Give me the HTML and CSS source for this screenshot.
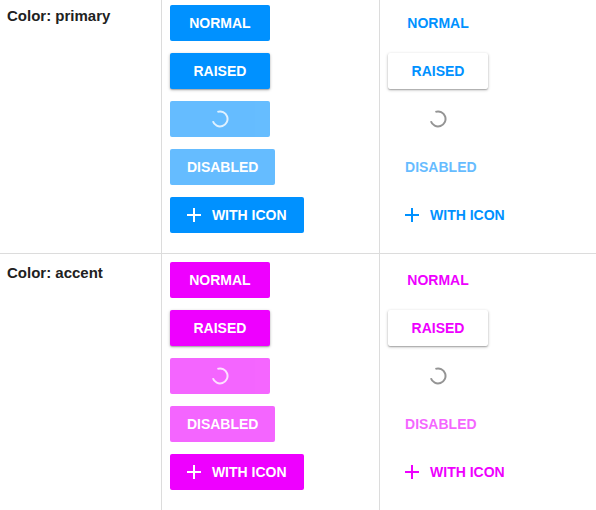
FILE: index.html
```
<!DOCTYPE html>
<html lang="en">

<head>
    <meta charset="UTF-8">
    <meta name="viewport" content="width=device-width, initial-scale=1.0">
    <title>Buttons</title>
    <link rel="stylesheet" href="styles.css">
</head>

<body>
    <table class="demo-table">
        <tbody>
            <tr class="primary">
                <th scope="row">Color: primary</th>
                <td class="filled-cell">
                    <div class="button-list">
                        <button class="button filled">NORMAL</button>
                        <button class="button filled raised">RAISED</button>
                        <button class="button filled" aria-label="Loading" disabled>
                            <svg class="spinner" viewBox="0 0 18 18"><path d="M6.4 1.9A7.5 7.5 0 1 1 1.9 11.3" /></svg>
                        </button>
                        <button class="button filled" disabled>DISABLED</button>
                        <button class="button filled">
                            <svg class="icon" viewBox="0 0 14 14"><path d="M6 0h2v6h6v2H8v6H6V8H0V6h6z" /></svg>
                            WITH ICON
                        </button>
                    </div>
                </td>
                <td>
                    <div class="button-list">
                        <button class="button">NORMAL</button>
                        <button class="button raised">RAISED</button>
                        <button class="button loading" aria-label="Loading" disabled>
                            <svg class="spinner" viewBox="0 0 18 18"><path d="M6.4 1.9A7.5 7.5 0 1 1 1.9 11.3" /></svg>
                        </button>
                        <button class="button" disabled>DISABLED</button>
                        <button class="button">
                            <svg class="icon" viewBox="0 0 14 14"><path d="M6 0h2v6h6v2H8v6H6V8H0V6h6z" /></svg>
                            WITH ICON
                        </button>
                    </div>
                </td>
            </tr>
            <tr class="accent">
                <th scope="row">Color: accent</th>
                <td>
                    <div class="button-list">
                        <button class="button filled">NORMAL</button>
                        <button class="button filled raised">RAISED</button>
                        <button class="button filled" aria-label="Loading" disabled>
                            <svg class="spinner" viewBox="0 0 18 18"><path d="M6.4 1.9A7.5 7.5 0 1 1 1.9 11.3" /></svg>
                        </button>
                        <button class="button filled" disabled>DISABLED</button>
                        <button class="button filled">
                            <svg class="icon" viewBox="0 0 14 14"><path d="M6 0h2v6h6v2H8v6H6V8H0V6h6z" /></svg>
                            WITH ICON
                        </button>
                    </div>
                </td>
                <td>
                    <div class="button-list">
                        <button class="button">NORMAL</button>
                        <button class="button raised">RAISED</button>
                        <button class="button loading" aria-label="Loading" disabled>
                            <svg class="spinner" viewBox="0 0 18 18"><path d="M6.4 1.9A7.5 7.5 0 1 1 1.9 11.3" /></svg>
                        </button>
                        <button class="button" disabled>DISABLED</button>
                        <button class="button">
                            <svg class="icon" viewBox="0 0 14 14"><path d="M6 0h2v6h6v2H8v6H6V8H0V6h6z" /></svg>
                            WITH ICON
                        </button>
                    </div>
                </td>
            </tr>
        </tbody>
    </table>
</body>

</html>
```
FILE: styles.css
```
body {
    margin: 0;
    background-color: #fff;
    color: #212121;
    font-family: "Liberation Sans", Arial, sans-serif;
}

.demo-table {
    width: 100%;
    border-collapse: separate;
    border-spacing: 0;
    table-layout: fixed;
}

.demo-table th,
.demo-table td {
    box-sizing: border-box;
    padding: 8px 8px 20px;
    vertical-align: top;
    text-align: left;
}

.demo-table th {
    width: 27%;
    padding-left: 7px;
    font-size: 15px;
    line-height: 22px;
}

.demo-table td {
    border-left: 1px solid #dcdcdc;
}

.demo-table .filled-cell {
    width: 36.6%;
}

.demo-table tr:first-child > * {
    padding-top: 5px;
}

.demo-table tr + tr > * {
    border-top: 1px solid #dcdcdc;
}

.primary {
    --color: #0091ff;
}

.accent {
    --color: #ee00ff;
}

.button-list {
    display: flex;
    flex-direction: column;
    align-items: flex-start;
    gap: 12px;
}

.button {
    display: flex;
    align-items: center;
    justify-content: center;
    gap: 11px;
    min-width: 100px;
    height: 36px;
    padding: 0 17px;
    border: none;
    border-radius: 2px;
    background-color: transparent;
    color: var(--color);
    font-family: inherit;
    font-size: 14px;
    font-weight: bold;
    white-space: nowrap;
    cursor: pointer;
}

.button.filled {
    background-color: var(--color);
    color: #fff;
}

.button.raised {
    box-shadow: 0 1px 3px rgba(0, 0, 0, 0.3), 0 1px 1px rgba(0, 0, 0, 0.15);
}

.button:disabled {
    opacity: 0.6;
    cursor: default;
}

.button.loading {
    color: #222;
}

.icon {
    width: 14px;
    height: 14px;
    fill: currentColor;
}

.spinner {
    width: 18px;
    height: 18px;
    fill: none;
    stroke: currentColor;
    stroke-width: 2;
    stroke-opacity: 0.8;
}
```
